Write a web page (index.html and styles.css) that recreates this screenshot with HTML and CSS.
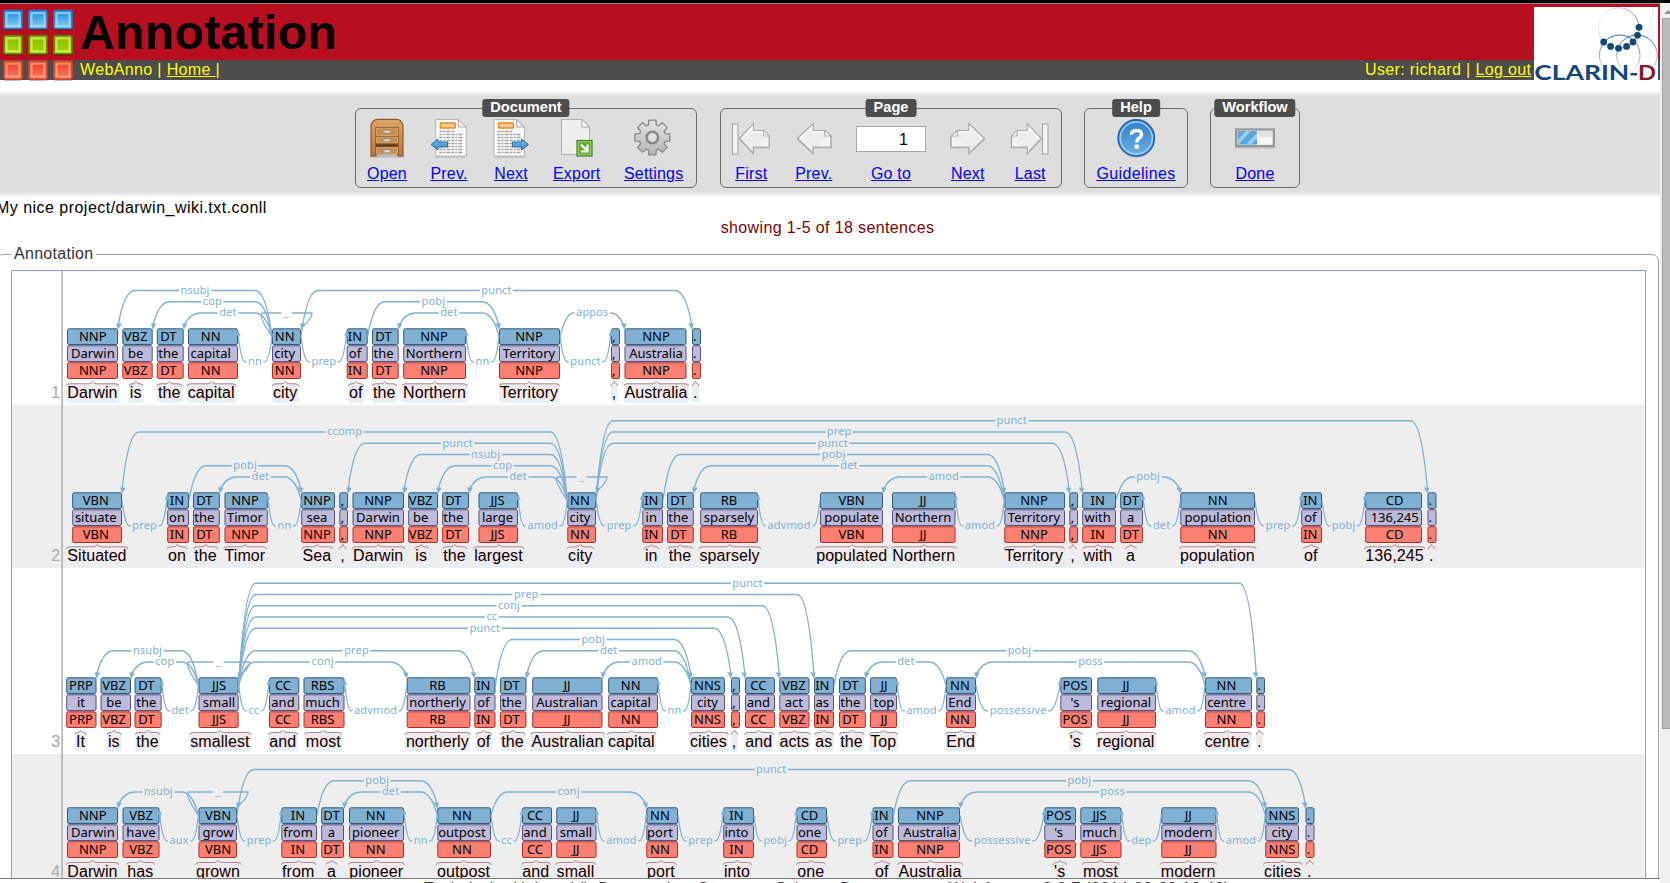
FILE: index.html
```html
<!DOCTYPE html>
<html lang="en">
<head>
<meta charset="utf-8">
<title>Annotation</title>
<link rel="stylesheet" href="styles.css">
</head>
<body>
<svg class="defs" width="0" height="0" aria-hidden="true">
  <defs>
    <linearGradient id="wood" x1="0" y1="0" x2="0" y2="1"><stop offset="0" stop-color="#d9a566"/><stop offset="1" stop-color="#b87a3c"/></linearGradient>
    <linearGradient id="paper" x1="0" y1="0" x2="1" y2="1"><stop offset="0" stop-color="#f2f2f2"/><stop offset=".6" stop-color="#ececec"/><stop offset="1" stop-color="#fff"/></linearGradient>
    <linearGradient id="metal" x1="0" y1="0" x2="0" y2="1"><stop offset="0" stop-color="#e4e4e4"/><stop offset="1" stop-color="#b5b5b5"/></linearGradient>
    <linearGradient id="help" x1="0" y1="0" x2="0" y2="1"><stop offset="0" stop-color="#2f7fc9"/><stop offset="1" stop-color="#6db0e6"/></linearGradient>
    <linearGradient id="azure" x1="0" y1="0" x2="0" y2="1"><stop offset="0" stop-color="#74b9ea"/><stop offset="1" stop-color="#3b8ccf"/></linearGradient>
    <linearGradient id="sq-b" x1="0" y1="0" x2="0" y2="1"><stop offset="0" stop-color="#1488dc"/><stop offset="1" stop-color="#8fd0f5"/></linearGradient>
    <linearGradient id="sq-g" x1="0" y1="0" x2="0" y2="1"><stop offset="0" stop-color="#8db600"/><stop offset="1" stop-color="#9fdc08"/></linearGradient>
    <linearGradient id="sq-r" x1="0" y1="0" x2="0" y2="1"><stop offset="0" stop-color="#ec3a22"/><stop offset="1" stop-color="#ff7866"/></linearGradient>
    <linearGradient id="fade" x1="0" y1="0" x2="0" y2="1"><stop offset="0" stop-color="#3d6795"/><stop offset=".6" stop-color="#a9b4cb"/><stop offset="1" stop-color="#f4f5f9"/></linearGradient>
    <linearGradient id="fade-up" x1="0" y1=".2" x2="1" y2=".6"><stop offset="0" stop-color="#eef0f5"/><stop offset="1" stop-color="#5d7499"/></linearGradient>
    <g id="page-arrow">
      <path d="M0 15.5 14.7 0V7H25L31 13V24.500H14.700V31Z" fill="#8a8a8a" opacity=".4" transform="translate(.3 1)"/>
      <path d="M.8 15.500 14.700 .8V7.500H25L30.500 13V24H14.700V30.500Z" fill="url(#paper)" stroke="#a8aaa9" stroke-width="1.200"/>
      <path d="M3 15.500 13.500 4V9H24.500" fill="none" stroke="#fff" stroke-width="1.200"/>
      <path d="M25 7.500V13H30.500Z" fill="#fff" stroke="#a8aaa9"/>
    </g>
    <g id="document">
      <path d="M.5 .5H23L31 8V37H.5Z" fill="#fcfcfc" stroke="#b4b4b4"/>
      <path d="M23 .5V8H31Z" fill="#eee" stroke="#a9a9a9"/>
      <rect x="5" y="4" width="15" height="5" rx=".8" fill="#f6c98e" stroke="#ee8a1d" stroke-width="1.300"/>
      <path d="M4 12.500H19M4 15.500H27M4 18.500H27M4 21.500H27M4 24.500H27M4 27.500H27M4 30.500H27M4 33.500H27" stroke="#a2a2a2" stroke-width="1.300" stroke-dasharray="3 1 2 1 4 1"/>
      <path d="M0 38.200H31" stroke="#999" opacity=".5"/>
    </g>
  </defs>
</svg>

<div class="window">
  <main class="page">
    <header class="banner">
      <svg class="app-logo" width="75" height="80" viewBox="0 4 75 80" id="app-logo"></svg>
      <div class="banner-text">
        <h1>Annotation</h1>
        <div class="navbar">
          <span>WebAnno | <a href="#">Home </a>|</span>
          <span>User: richard | <a href="#">Log out</a></span>
        </div>
      </div>
      <svg class="clarin" width="124" height="76" viewBox="1534 7 124 76">
        <rect x="1534" y="7" width="124" height="76" fill="#fff"/>
        <g fill="none">
          <circle cx="1618.700" cy="28" r="20.300" stroke="url(#fade-up)" stroke-width=".9"/>
          <circle cx="1619.700" cy="55.300" r="20.300" stroke="url(#fade)"/>
          <circle cx="1637" cy="55.300" r="20.300" stroke="url(#fade)"/>
        </g>
        <g fill="#12477c">
          <circle cx="1639" cy="27.300" r="3.400"/><circle cx="1637.500" cy="35.300" r="3.400"/><circle cx="1633" cy="42" r="3.400"/>
          <circle cx="1626.600" cy="46.400" r="3.400"/><circle cx="1618.500" cy="48.300" r="3.400"/><circle cx="1610.600" cy="46.400" r="3.400"/><circle cx="1603.700" cy="42" r="3.400"/>
        </g>
        <g class="clarin-word">
          <text x="1534.200" y="80" textLength="95" lengthAdjust="spacingAndGlyphs" fill="#12477c">CLARIN</text>
          <rect x="1630.500" y="73" width="6.500" height="2.400" fill="#12477c"/>
          <text x="1638" y="80" textLength="18" lengthAdjust="spacingAndGlyphs" fill="#8a1420">D</text>
        </g>
      </svg>
    </header>

    <nav class="toolbar">
      <section class="group group-document">
        <h2>Document</h2>
        <a href="#"><svg viewBox="0 0 40 40">
          <path d="M3 38.500H37" stroke="#888" stroke-width="2" opacity=".5"/>
          <path d="M4 38V7Q6 1 11 1.300H29Q34 1 36 7V38H31V36H9V38Z" fill="url(#wood)" stroke="#8c5a2b" stroke-width="1.200"/>
          <path d="M8.500 9H31.500V36H8.500Z" fill="#6e3f1d"/>
          <path d="M9.500 10H30.500V17.500H9.500ZM9.500 19H30.500V25H9.500ZM9.500 29.500H30.500V35.500H9.500Z" fill="#c98d4e" stroke="#e3b47c" stroke-width=".8"/>
          <path d="M16 12.500H24V14Q20 16.500 16 14ZM16 21H24V22.500Q20 25 16 22.500ZM16 32H24V33.500Q20 36 16 33.500Z" fill="#dfe2e8" stroke="#8c8177" stroke-width=".6"/>
        </svg>Open</a>
        <a href="#"><svg viewBox="0 0 40 40"><use href="#document" x="6.300" y="1"/><path d="M2 26.500 9 21V24H18.500V29H9V32Z" fill="url(#azure)" stroke="#1f6cab"/></svg>Prev.</a>
        <a href="#"><svg viewBox="0 0 40 40"><use href="#document" x="2.500" y="1"/><path d="M37.500 26.500 30.500 21V24H21.500V29H30.500V32Z" fill="url(#azure)" stroke="#1f6cab"/></svg>Next</a>
        <a href="#"><svg viewBox="0 0 40 40">
          <path d="M4.500 1.500H25L32.500 9V36.500H4.500Z" fill="url(#paper)" stroke="#b0b0b0"/><path d="M25 1.500V9H32.500Z" fill="#fff" stroke="#a5a5a5"/>
          <rect x="20" y="22.500" width="15" height="15.500" fill="#5fae2b" stroke="#3c8317" stroke-width="1.200"/><rect x="21.200" y="23.700" width="12.600" height="13.100" fill="none" stroke="#a5d883" stroke-width=".9"/>
          <path d="M24 26.500 29.500 32M30.500 26.500V33.500H24" fill="none" stroke="#fff" stroke-width="2.200"/>
        </svg>Export</a>
        <a href="#"><svg viewBox="0 0 40 40">
          <path id="gear" fill="url(#metal)" stroke="#868686" stroke-width="1.300" stroke-linejoin="round"/>
          <circle cx="18.400" cy="19.500" r="5.700" fill="none" stroke="#858585" stroke-width="2.400"/><circle cx="18.400" cy="19.500" r="4.200" fill="#dedede"/>
        </svg>Settings</a>
      </section>
      <section class="group group-page">
        <h2>Page</h2>
        <a href="#"><svg viewBox="0 0 40 40"><rect x="1.500" y="6" width="5.500" height="30" fill="#f4f4f4" stroke="#a8aaa9" stroke-width="1.200"/><use href="#page-arrow" x="7.700" y="5"/></svg>First</a>
        <a href="#"><svg viewBox="0 0 40 40"><use href="#page-arrow" transform="translate(2.500 5) scale(1.130 1)"/></svg>Prev.</a>
        <div class="goto"><span class="page-number">1</span><a href="#">Go to</a></div>
        <a href="#"><svg viewBox="0 0 40 40"><use href="#page-arrow" transform="translate(37.500 5) scale(-1.130 1)"/></svg>Next</a>
        <a href="#"><svg viewBox="0 0 40 40"><use href="#page-arrow" transform="translate(32 5) scale(-1 1)"/><rect x="32.500" y="6" width="5.500" height="30" fill="#f4f4f4" stroke="#a8aaa9" stroke-width="1.200"/></svg>Last</a>
      </section>
      <section class="group group-help">
        <h2>Help</h2>
        <a href="#"><svg viewBox="0 0 40 40">
          <circle cx="20.300" cy="20.800" r="18.800" fill="#777" opacity=".4"/>
          <circle cx="20.300" cy="20" r="18.200" fill="url(#help)" stroke="#1d62b0" stroke-width="1.400"/><circle cx="20.300" cy="20" r="16" fill="none" stroke="#a9d2f3" stroke-width="1.300"/>
          <path d="M15.500 16.800Q15.500 12.500 20.500 12.500T25.500 16.500Q25.500 18.800 23 20.300Q20.800 21.700 20.800 24.500" fill="none" stroke="#fff" stroke-width="3.400"/><circle cx="20.800" cy="28.700" r="2.400" fill="#fff"/>
        </svg>Guidelines</a>
      </section>
      <section class="group group-workflow">
        <h2>Workflow</h2>
        <a href="#"><svg viewBox="0 0 40 40">
          <rect x="0" y="12" width="39.500" height="18.500" fill="#8d8d8d" opacity=".4"/>
          <rect x="1" y="11.500" width="37.800" height="16.500" fill="#f7f7f7" stroke="#959595" stroke-width="2.200"/>
          <rect x="23" y="13" width="14" height="6" fill="#e2e2e4"/>
          <rect x="2.500" y="13" width="19.500" height="13.500" fill="#5ba8df"/><path d="M2.500 22 11 13H16L3.500 26.500H2.500ZM11 26.500 22 15V20L16 26.500Z" fill="#9ccdf0"/>
        </svg>Done</a>
      </section>
    </nav>

    <p class="document-name">My nice project/darwin_wiki.txt.conll</p>
    <p class="status">showing 1-5 of 18 sentences</p>

    <fieldset class="annotation">
      <legend>Annotation</legend>
      <div class="canvas"><svg id="brat" width="1633" height="700" viewBox="12 271 1633 700"></svg></div>
    </fieldset>
  </main>
  <aside class="scrollbar"><i></i><b></b></aside>
  <footer>Technische Universität Darmstadt -- Computer Science Department -- WebAnno -- 2.0.7 (2014-08-28 16:43)</footer>
</div>
<script src="annotation.js"></script>
</body>
</html>
```
FILE: styles.css
```css
* { box-sizing: border-box; }
body {
  margin: 0;
  background: #fff;
  font: 16px/18px "Liberation Sans", Arial, sans-serif;
  color: #000;
  overflow: hidden;
}
.defs { position: absolute; }
.window {
  display: grid;
  grid-template: 875px 5px / 1660px 10px;
  height: 883px;
  border-top: 3px solid #000;
  overflow: hidden;
}
.page { height: 875px; overflow: hidden; }

.banner {
  position: relative;
  display: flex;
  height: 77px;
  border-top: 1px solid #8d8d8d;
  background: linear-gradient(#b70f20 56px, #4d4d4d 56px);
}
.app-logo { flex: none; }
.banner-text { flex: 1; padding-left: 5px; }
h1 {
  margin: 0;
  height: 56px;
  padding-top: 1px;
  font-size: 48px;
  line-height: 56px;
  letter-spacing: .4px;
}
.navbar {
  display: flex;
  justify-content: space-between;
  width: 1451.300px;
  line-height: 19px;
  letter-spacing: .36px;
  color: #ff0;
}
.navbar a { color: #ff0; white-space: pre; }
.clarin { position: absolute; right: 2px; top: 3px; }
.clarin-word { font: 700 21px Lato, sans-serif; }

.toolbar {
  display: flex;
  gap: 22px;
  height: 108px;
  margin-top: 10px;
  padding: 18px 0 0 355px;
  background: linear-gradient(#fff, #f7f7f7 2px, #e2e2e2 5px, #dedede 8px, #dedede 100px, #e2e2e2 103px, #f7f7f7 106px, #fff);
}
.group {
  position: relative;
  display: grid;
  height: 80px;
  border: 1.500px solid #6b6b6b;
  border-radius: 6px;
  padding-top: 9px;
}
.group-document { grid-template-columns: 62px 62px 62px 69.4px 84.6px; width: 342px; }
.group-page { grid-template-columns: 60.5px 64.5px 90px 63.5px 61.5px; width: 342px; margin-left: 1px; }
.group-help { grid-template-columns: 1fr; width: 104px; }
.group-workflow { grid-template-columns: 1fr; width: 90px; }
.group h2 {
  position: absolute;
  top: -10px;
  left: 50%;
  transform: translateX(-50%);
  margin: 0;
  padding: 0 8px;
  border-radius: 3px;
  background: #4d4d4d;
  color: #fff;
  font-size: 14.600px;
  line-height: 17.500px;
}
.group a, .goto {
  display: flex;
  flex-direction: column;
  align-items: center;
  color: #00f;
  line-height: 18px;
  letter-spacing: .2px;
}
.group-help a { letter-spacing: .35px; }
.group svg { width: 40px; height: 40px; margin-bottom: 7px; }
.page-number {
  width: 70px;
  height: 26px;
  margin: 8px 0 13px;
  padding-right: 17px;
  border: 1px solid #a5a5a5;
  background: #fff;
  color: #000;
  line-height: 25px;
  text-align: right;
}

.document-name { margin: 1px 0 0 -4px; letter-spacing: .47px; }
.status { margin: 2px 5px 0 0; text-align: center; color: #800000; letter-spacing: .37px; }

.annotation {
  margin: 8px 1px 0 -4px;
  padding: 7px 12px 0 14px;
  border: 1px solid #a2a2a2;
  border-radius: 7px;
  height: 800px;
}
.annotation legend { padding: 0 2px 0 3px; color: #333; letter-spacing: .3px; }
.canvas { width: 1635px; height: 720px; border: 1px solid #7f9ff5; overflow: hidden; }
.canvas svg { display: block; }

.word { font: 16px "Liberation Sans", Arial, sans-serif; letter-spacing: .07px; }
.number { font: 16px "Liberation Sans", Arial, sans-serif; fill: #a8a8a8; text-anchor: end; }
.tag { font: 13px "Noto Sans", sans-serif; text-anchor: middle; }
.arc-label { font: 11px "Noto Sans", sans-serif; fill: #80b1d3; text-anchor: middle; letter-spacing: .15px; }
.arc { fill: none; stroke: #80b1d3; stroke-width: 1.300; }
.arrow { fill: #80b1d3; }
.brace { fill: none; stroke: #b5736d; stroke-width: .9; }
.box-pos { fill: #80b1d3; stroke: #345a75; }
.box-lemma { fill: #bebada; stroke: #55507f; }
.box-coarse { fill: #fb8072; stroke: #a5302a; }

.scrollbar { position: relative; background: #f0f0f0; grid-row: 1 / 3; grid-column: 2; }
.scrollbar b {
  position: absolute;
  left: 2px;
  right: -4px;
  top: 15px;
  height: 711px;
  border: 1px solid #a0a0a0;
  background: #bbb;
}
.scrollbar i {
  position: absolute;
  left: 4px;
  top: 7px;
  border: 4px solid transparent;
  border-top: 0;
  border-bottom-color: #909090;
}
footer {
  height: 5px;
  border-top: 1px solid #7d7d80;
  background: #fff;
  padding: 1px 6px 0 0;
  text-align: center;
  letter-spacing: .41px;
  overflow: hidden;
  color: #333;
}
```
FILE: annotation.js
```js
const NS = 'http://www.w3.org/2000/svg';
function add(parent, name, attrs, text) {
  const node = document.createElementNS(NS, name);
  for (const key in attrs) node.setAttribute(key, attrs[key]);
  if (text !== undefined) node.textContent = text;
  parent.appendChild(node);
  return node;
}

/* Grid of coloured squares in the banner. */
const logo = document.getElementById('app-logo');
[['#1b7fcb', '#a5dcfa', 'sq-b'], ['#4e8f00', '#e3ef6a', 'sq-g'], ['#d8402f', '#ffb070', 'sq-r']].forEach(([edge, rim, fill], row) => {
  for (let col = 0; col < 3; col++) {
    const x = 3.5 + col * 25, y = 10 + row * 25.3;
    add(logo, 'rect', { x, y: y + 1.5, width: 19, height: 19, rx: 2, fill: '#000', opacity: .25 });
    add(logo, 'rect', { x: x + .5, y: y + .5, width: 18, height: 18, rx: 1, fill: `url(#${fill})`, stroke: edge, 'stroke-width': 1.6 });
    add(logo, 'rect', { x: x + 3, y: y + 3, width: 13, height: 13, fill: 'none', stroke: rim, 'stroke-width': 2.2, opacity: .75 });
  }
});

/* Eight-toothed gear outline. */
let gear = '';
for (let i = 0; i < 8; i++) {
  [[-.3, 13.3], [-.2, 17.8], [.2, 17.8], [.3, 13.3]].forEach(([offset, r]) => {
    const a = i * Math.PI / 4 + offset;
    gear += (gear ? 'L' : 'M') + (18.4 + r * Math.sin(a)).toFixed(2) + ' ' + (19.5 - r * Math.cos(a)).toFixed(2);
  });
}
document.getElementById('gear').setAttribute('d', gear + 'Z');

/* Token: left, right, label centre, word start, tag, lemma, word.
   Arc: left token, right token, label, level, end that has the arrow ('L' or 'R').
   Hook: the same without a level; it runs below the tags. */
const sentences = [
  { top: 328.3, base: 398.3, band: [271, 404.7], self: 4,
    tokens: [
      [67, 118, 92.8, 67, 'NNP', 'Darwin', 'Darwin'], [122.3, 152.7, 135.6, 129.5, 'VBZ', 'be', 'is'],
      [156.8, 183.7, 168.3, 157.7, 'DT', 'the', 'the'], [188, 238, 210.7, 187.5, 'NN', 'capital', 'capital'],
      [272, 301, 284.7, 272.7, 'NN', 'city', 'city'], [346.7, 367.7, 355, 348.7, 'IN', 'of', 'of'],
      [372, 398.7, 383.5, 372.7, 'DT', 'the', 'the'], [403.2, 466, 434, 402.8, 'NNP', 'Northern', 'Northern'],
      [499, 560, 529, 499.4, 'NNP', 'Territory', 'Territory'], [611, 620, 613.7, 611.5, ',', ',', ','],
      [624.5, 686.5, 656, 624.2, 'NNP', 'Australia', 'Australia'], [692, 701, 694.7, 692.7, '.', '.', '.']],
    arcs: [[0, 4, 'nsubj', 2, 'L'], [1, 4, 'cop', 1, 'L'], [2, 4, 'det', 0, 'L'], [4, 11, 'punct', 2, 'R'], [5, 8, 'pobj', 1, 'R'], [6, 8, 'det', 0, 'L'], [8, 10, 'appos', 0, 'R']],
    hooks: [[3, 4, 'nn', 'L'], [4, 5, 'prep', 'R'], [7, 8, 'nn', 'L'], [8, 9, 'punct', 'R']] },
  { top: 492.3, base: 561.3, band: [404.7, 568], self: 10,
    tokens: [
      [72.2, 122, 95.7, 67, 'VBN', 'situate', 'Situated'], [167.2, 189, 177, 167.7, 'IN', 'on', 'on'],
      [193, 219.8, 204.3, 194, 'DT', 'the', 'the'], [224.5, 267.8, 245, 224.3, 'NNP', 'Timor', 'Timor'],
      [301.2, 335, 317, 302.3, 'NNP', 'sea', 'Sea'], [339.3, 348, 342.5, 340, ',', ',', ','],
      [352.5, 404, 378, 352.8, 'NNP', 'Darwin', 'Darwin'], [408.2, 438, 420.7, 415, 'VBZ', 'be', 'is'],
      [442.2, 469, 453.3, 443, 'DT', 'the', 'the'], [478.5, 518, 497.5, 473.9, 'JJS', 'large', 'largest'],
      [567.3, 596, 580, 567.8, 'NN', 'city', 'city'], [642.3, 663, 651.3, 644.6, 'IN', 'in', 'in'],
      [667, 693.8, 678.3, 668.4, 'DT', 'the', 'the'], [700.2, 758, 729, 699.2, 'RB', 'sparsely', 'sparsely'],
      [820, 883, 851.5, 815.9, 'VBN', 'populate', 'populated'], [892, 955.5, 923, 892, 'JJ', 'Northern', 'Northern'],
      [1004.3, 1065, 1034, 1004.3, 'NNP', 'Territory', 'Territory'], [1069.3, 1078, 1072.5, 1070, ',', ',', ','],
      [1082.2, 1116, 1097.7, 1083.2, 'IN', 'with', 'with'], [1120.2, 1143, 1130.7, 1125.8, 'DT', 'a', 'a'],
      [1180.3, 1255, 1217.7, 1179.8, 'NN', 'population', 'population'], [1301.2, 1322, 1310.3, 1303.8, 'IN', 'of', 'of'],
      [1365.2, 1422, 1394.7, 1365, 'CD', '136,245', '136,245'], [1427.5, 1436.5, 1430.3, 1428.7, '.', '.', '.']],
    arcs: [[0, 10, 'ccomp', 4, 'L'], [5, 10, 'punct', 3, 'L'], [6, 10, 'nsubj', 2, 'L'], [7, 10, 'cop', 1, 'L'], [8, 10, 'det', 0, 'L'], [1, 4, 'pobj', 1, 'R'], [2, 4, 'det', 0, 'L'],
      [10, 23, 'punct', 5, 'R'], [10, 18, 'prep', 4, 'R'], [10, 17, 'punct', 3, 'R'], [11, 16, 'pobj', 2, 'R'], [12, 16, 'det', 1, 'L'], [14, 16, 'amod', 0, 'L'], [18, 20, 'pobj', 0, 'R']],
    hooks: [[0, 1, 'prep', 'R'], [3, 4, 'nn', 'L'], [9, 10, 'amod', 'L'], [10, 11, 'prep', 'R'], [13, 14, 'advmod', 'L'], [15, 16, 'amod', 'L'], [19, 20, 'det', 'L'], [20, 21, 'prep', 'R'], [21, 22, 'pobj', 'R']] },
  { top: 677.3, base: 747, band: [568, 754], self: 3,
    tokens: [
      [66.2, 96.5, 81, 75.7, 'PRP', 'it', 'It'], [100.5, 131, 114, 107.7, 'VBZ', 'be', 'is'],
      [134.5, 161.7, 146.3, 135.9, 'DT', 'the', 'the'], [198.5, 238.7, 219, 190, 'JJS', 'small', 'smallest'],
      [269, 299.3, 283, 269, 'CC', 'and', 'and'], [303.5, 344.5, 322.5, 305.5, 'RBS', 'much', 'most'],
      [406.7, 470.5, 437.5, 405.6, 'RB', 'northerly', 'northerly'], [474.3, 495.5, 483.3, 476.4, 'IN', 'of', 'of'],
      [500, 526.5, 511.5, 501, 'DT', 'the', 'the'], [532.2, 602.5, 567, 531.2, 'JJ', 'Australian', 'Australian'],
      [608.2, 658, 630.7, 607.7, 'NN', 'capital', 'capital'], [691, 725, 707.5, 689.7, 'NNS', 'city', 'cities'],
      [731, 740, 734, 731.5, ',', ',', ','], [745, 775, 758.3, 745, 'CC', 'and', 'and'],
      [779.3, 809.5, 793.8, 779.2, 'VBZ', 'act', 'acts'], [814, 834, 822.3, 815, 'IN', 'as', 'as'],
      [839, 865.8, 850.3, 840, 'DT', 'the', 'the'], [870, 897, 884, 870, 'JJ', 'top', 'Top'],
      [946, 976, 960, 946, 'NN', 'End', 'End'], [1060.3, 1092, 1075, 1069.4, 'POS', "'s", "'s"],
      [1097.3, 1156, 1126, 1096.7, 'JJ', 'regional', 'regional'], [1205, 1252, 1226.5, 1204.4, 'NN', 'centre', 'centre'],
      [1256.3, 1265, 1259, 1256.7, '.', '.', '.']],
    arcs: [[0, 3, 'nsubj', 1, 'L'], [1, 3, 'cop', 0, 'L'], [3, 22, 'punct', 7, 'R'], [3, 15, 'prep', 6, 'R'], [3, 14, 'conj', 5, 'R'], [3, 13, 'cc', 4, 'R'], [3, 12, 'punct', 3, 'R'],
      [3, 7, 'prep', 1, 'R'], [3, 6, 'conj', 0, 'R'], [7, 11, 'pobj', 2, 'R'], [8, 11, 'det', 1, 'L'], [9, 11, 'amod', 0, 'L'], [15, 21, 'pobj', 1, 'R'], [16, 18, 'det', 0, 'L'], [18, 21, 'poss', 0, 'L']],
    hooks: [[2, 3, 'det', 'L'], [3, 4, 'cc', 'R'], [5, 6, 'advmod', 'L'], [10, 11, 'nn', 'L'], [17, 18, 'amod', 'L'], [18, 19, 'possessive', 'R'], [20, 21, 'amod', 'L']] },
  { top: 807.3, base: 877, band: [754, 940], self: 2,
    tokens: [
      [67, 118, 92.8, 67, 'NNP', 'Darwin', 'Darwin'], [122.5, 159.5, 141, 127, 'VBZ', 'have', 'has'],
      [198.5, 237, 218, 195.7, 'VBN', 'grow', 'grown'], [281.3, 317, 298, 281.8, 'IN', 'from', 'from'],
      [321.2, 344, 331.5, 326.6, 'DT', 'a', 'a'], [349, 404, 375.7, 349, 'NN', 'pioneer', 'pioneer'],
      [437.3, 491, 461.9, 436.8, 'NN', 'outpost', 'outpost'], [522, 552, 535, 522, 'CC', 'and', 'and'],
      [556.3, 596.5, 576, 556.3, 'JJ', 'small', 'small'], [646.3, 678, 660, 646.7, 'NN', 'port', 'port'],
      [723.2, 754, 736.5, 723.7, 'IN', 'into', 'into'], [796.5, 827, 809.5, 797, 'CD', 'one', 'one'],
      [872.5, 893.5, 881.5, 874.8, 'IN', 'of', 'of'], [898, 960, 930, 898.2, 'NNP', 'Australia', 'Australia'],
      [1044.3, 1076, 1058.7, 1053.8, 'POS', "'s", "'s"], [1080.3, 1121.5, 1099.5, 1082.7, 'JJS', 'much', 'most'],
      [1161.3, 1216.5, 1188.3, 1160.5, 'JJ', 'modern', 'modern'], [1265.3, 1299, 1282, 1263.8, 'NNS', 'city', 'cities'],
      [1305.5, 1314.5, 1308.5, 1306.8, '.', '.', '.']],
    arcs: [[0, 2, 'nsubj', 0, 'L'], [2, 18, 'punct', 2, 'R'], [3, 6, 'pobj', 1, 'R'], [4, 6, 'det', 0, 'L'], [6, 9, 'conj', 0, 'R'], [12, 17, 'pobj', 1, 'R'], [13, 17, 'poss', 0, 'L']],
    hooks: [[1, 2, 'aux', 'L'], [2, 3, 'prep', 'R'], [5, 6, 'nn', 'L'], [6, 7, 'cc', 'R'], [8, 9, 'amod', 'L'], [9, 10, 'prep', 'R'], [10, 11, 'pobj', 'R'], [11, 12, 'prep', 'R'], [13, 14, 'possessive', 'R'], [15, 16, 'dep', 'L'], [16, 17, 'amod', 'L']] }
];

const svg = document.getElementById('brat');
const SLANT = 17;

function labelled(x, y, text) {
  const node = add(svg, 'text', { x, y, class: 'arc-label' }, text);
  return node.getComputedTextLength() / 2 + 1.5;
}
function arrowHead(x, y, lean, up) {
  const d = up ? `M${x} ${y}l-2.600 5.500h5.200Z` : `M${x} ${y}l${-2.8 + lean} -6.500l5.600 0.500Z`;
  add(svg, 'path', { d, class: 'arrow' });
}

sentences.forEach((s, index) => {
  if (index % 2) add(svg, 'rect', { x: 12, y: s.band[0], width: 1632.5, height: s.band[1] - s.band[0], fill: '#eee' });
  add(svg, 'text', { x: 60.2, y: s.base, class: 'number' }, index + 1);

  s.tokens.forEach(([x0, x1, cx, wx, tag, lemma, word]) => {
    const group = add(svg, 'g', {});
    const text = add(svg, 'text', { x: wx + .3, y: s.base, class: 'word' }, word);
    const w = text.getComputedTextLength() + 2.2, l = wx - .5;
    add(group, 'rect', { x: l, y: s.base - 15.3, width: w, height: 19.7, rx: 2, fill: '#e6eff7' });
    add(group, 'rect', { x: l + 1.5, y: s.base - 12, width: w - 3, height: 13, rx: 2, fill: '#ffe6e3', opacity: .7 });
    const m = l + w / 2, b = s.base - 14.5, q = Math.min(4, w / 4);
    add(svg, 'path', { class: 'brace', d: `M${l} ${b + 2.3}Q${l} ${b} ${l + q} ${b}H${m - q}Q${m - 1} ${b} ${m} ${b - 2.3}Q${m + 1} ${b} ${m + q} ${b}H${l + w - q}Q${l + w} ${b} ${l + w} ${b + 2.3}` });
    [['box-pos', tag], ['box-lemma', lemma], ['box-coarse', tag]].forEach(([cls, label], i) => {
      const y = s.top + 17 * i;
      add(svg, 'rect', { x: x0 + .5, y: y + .5, width: x1 - x0 - 1, height: 15.7, rx: 1.5, class: cls });
      add(svg, 'text', { x: cx, y: y + 12.8, class: 'tag' }, label);
    });
  });

  s.arcs.forEach(([a, b, label, level, end]) => {
    const y = s.top - 15.3 - 11.25 * level;
    const l = s.tokens[a][1], r = s.tokens[b][0], m = (l + r) / 2;
    const half = labelled(m, y + 3.4, label);
    const slant = Math.min(SLANT, m - half - l - 1);
    const yl = s.top + (end === 'L' ? -2 : 8), yr = s.top + (end === 'R' ? -2 : 8);
    add(svg, 'path', { class: 'arc', d: `M${l} ${yl}Q${l + 6} ${y} ${l + slant} ${y}H${m - half}M${m + half} ${y}H${r - slant}Q${r - 6} ${y} ${r} ${yr}` });
    arrowHead(end === 'L' ? l : r, s.top + 1.5, end === 'L' ? 1 : -1);
  });

  s.hooks.forEach(([a, b, label, end]) => {
    const y = s.top + 33.5;
    const l = s.tokens[a][1], r = s.tokens[b][0], m = (l + r) / 2;
    const half = labelled(m, y + 3.2, label), cl = m - half - 1.2, cr = m + half + 1.2;
    const yl = s.top + (end === 'L' ? 5 : 8), yr = s.top + (end === 'R' ? 5 : 8);
    add(svg, 'path', { class: 'arc', d: `M${l} ${yl}Q${l + (cl - l) * .4} ${y} ${cl} ${y}H${m - half}M${m + half} ${y}H${cr}Q${r - (r - cr) * .4} ${y} ${r} ${yr}` });
    arrowHead(end === 'L' ? l : r, s.top + 2, 0, true);
  });

  const [x0, x1] = s.tokens[s.self], y = s.top - 15.3, m = (x0 + x1) / 2;
  labelled(m, y + 3.4, '_');
  add(svg, 'path', { class: 'arc', d: `M${x0} ${s.top + 8}Q${x0 - 14} ${y + 3} ${x0 - 10} ${y}H${m - 5}M${m + 5} ${y}H${x1 + 11}Q${x1 + 12} ${y + 4} ${x1 + 1} ${s.top - 1}` });
  arrowHead(x1, s.top + 1.5, 2);
});
add(svg, 'rect', { x: 61.4, y: 271, width: 1.4, height: 700, fill: '#a9a9a9' });
```
